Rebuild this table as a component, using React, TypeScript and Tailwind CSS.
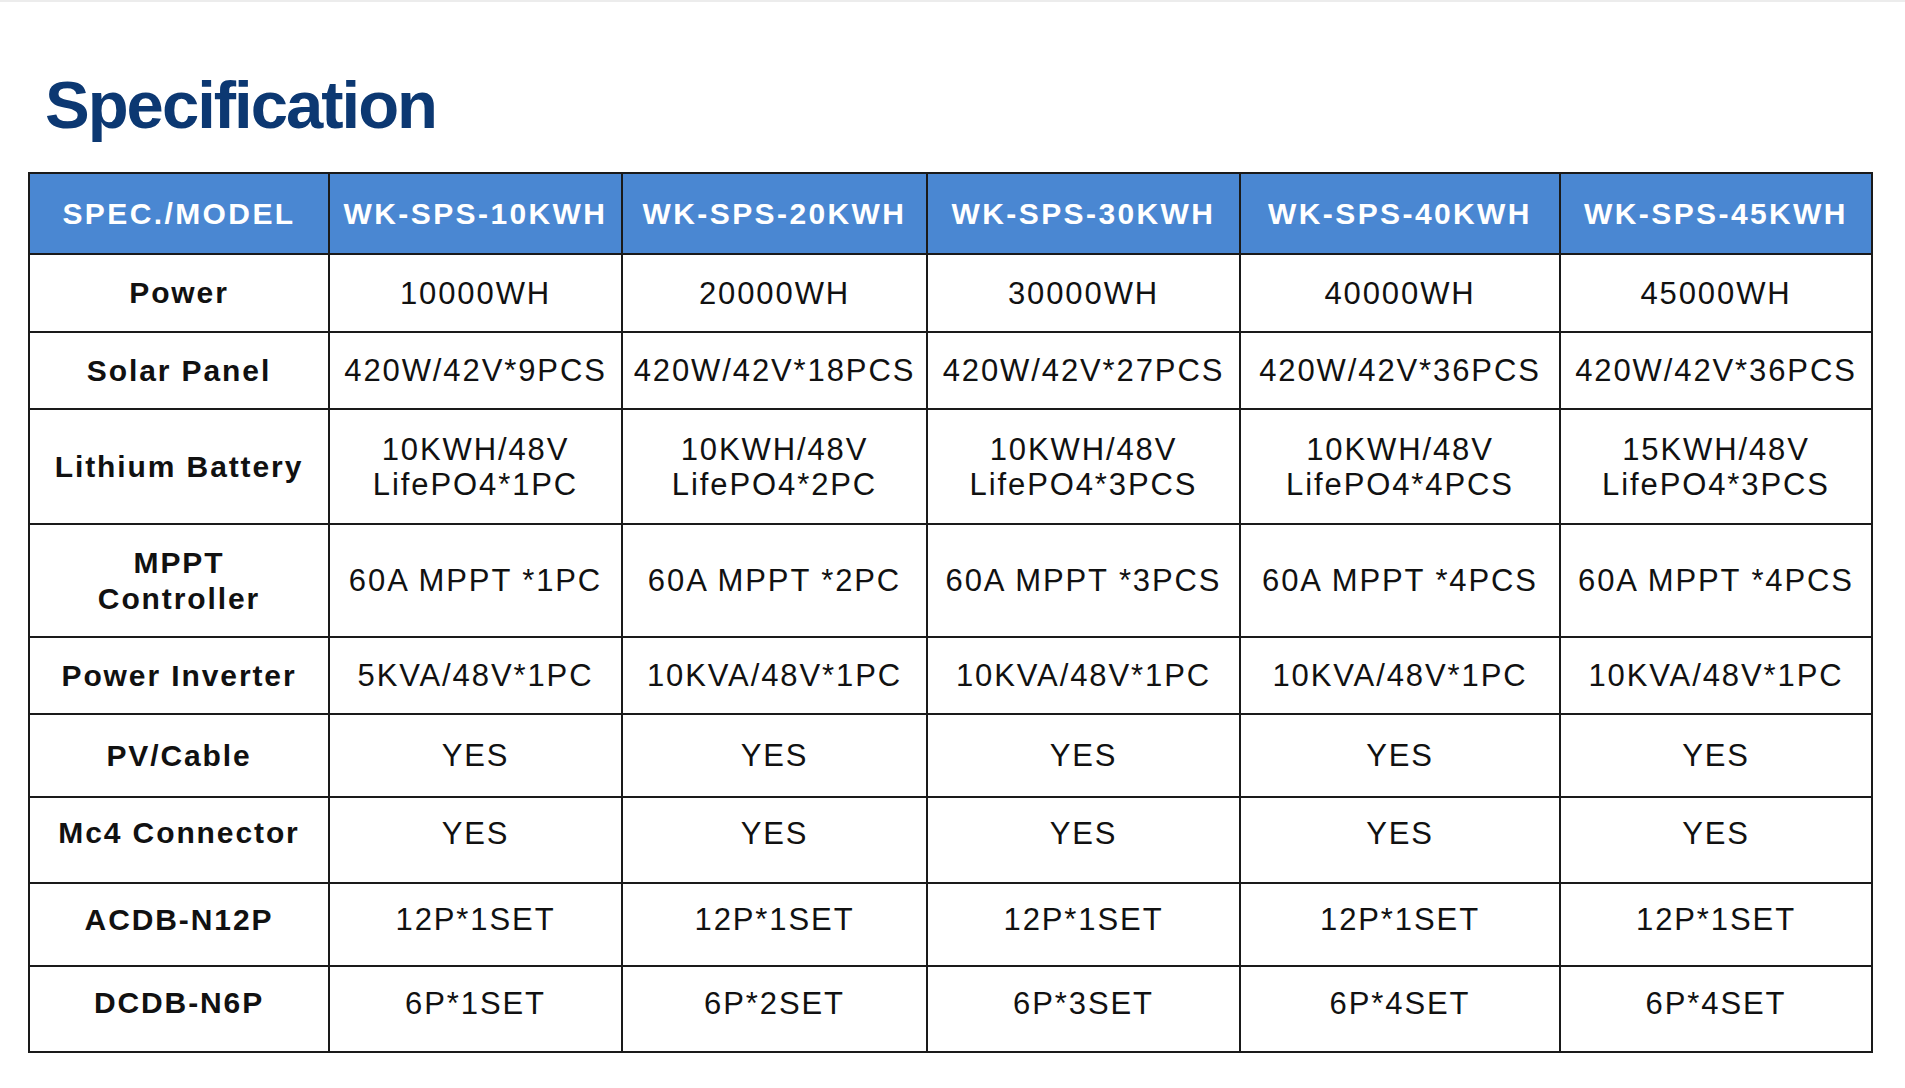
import React from "react";

const headers = [
  "SPEC./MODEL",
  "WK-SPS-10KWH",
  "WK-SPS-20KWH",
  "WK-SPS-30KWH",
  "WK-SPS-40KWH",
  "WK-SPS-45KWH",
];

const rows: { label: React.ReactNode; values: React.ReactNode[]; pad: string }[] = [
  { label: "Power", pad: "pb-0", values: ["10000WH", "20000WH", "30000WH", "40000WH", "45000WH"] },
  {
    label: "Solar Panel",
    pad: "pb-0",
    values: ["420W/42V*9PCS", "420W/42V*18PCS", "420W/42V*27PCS", "420W/42V*36PCS", "420W/42V*36PCS"],
  },
  {
    label: "Lithium Battery",
    pad: "pb-0",
    values: [
      <>10KWH/48V<br />LifePO4*1PC</>,
      <>10KWH/48V<br />LifePO4*2PC</>,
      <>10KWH/48V<br />LifePO4*3PCS</>,
      <>10KWH/48V<br />LifePO4*4PCS</>,
      <>15KWH/48V<br />LifePO4*3PCS</>,
    ],
  },
  {
    label: <>MPPT<br />Controller</>,
    pad: "pb-0",
    values: ["60A MPPT *1PC", "60A MPPT *2PC", "60A MPPT *3PCS", "60A MPPT *4PCS", "60A MPPT *4PCS"],
  },
  {
    label: "Power Inverter",
    pad: "pb-0",
    values: ["5KVA/48V*1PC", "10KVA/48V*1PC", "10KVA/48V*1PC", "10KVA/48V*1PC", "10KVA/48V*1PC"],
  },
  { label: "PV/Cable", pad: "pb-0", values: ["YES", "YES", "YES", "YES", "YES"] },
  { label: "Mc4 Connector", pad: "pb-[14px]", values: ["YES", "YES", "YES", "YES", "YES"] },
  { label: "ACDB-N12P", pad: "pb-[10px]", values: ["12P*1SET", "12P*1SET", "12P*1SET", "12P*1SET", "12P*1SET"] },
  { label: "DCDB-N6P", pad: "pb-[12px]", values: ["6P*1SET", "6P*2SET", "6P*3SET", "6P*4SET", "6P*4SET"] },
];

export default function App() {
  return (
    <div
      className="w-[1905px] h-[1088px] bg-white overflow-hidden"
      style={{ fontFamily: '"Liberation Sans", Arial, sans-serif' }}
    >
      <div className="h-[2px] bg-[#ececec]" />
      <div className="pl-[28px] pt-[69px]">
        <h1 className="ml-[17px] text-[67px] leading-[67px] font-bold tracking-[-2px] text-[#0c3872]">
          Specification
        </h1>
        <div className="mt-[34px] w-fit grid grid-cols-[298px_291px_303px_311px_318px_310px] grid-rows-[79px_76px_75px_113px_111px_75px_81px_84px_81px_84px] gap-[2px] p-[2px] bg-[#1a1a1a]">
          {headers.map((h) => (
            <div
              key={h}
              className="bg-[#4a87d2] text-white font-bold text-[30px] tracking-[2.4px] flex items-center justify-center text-center whitespace-nowrap"
            >
              {h}
            </div>
          ))}
          {rows.map((r, i) => (
            <React.Fragment key={i}>
              <div
                className={`bg-white text-[#111] font-bold text-[30px] leading-[36px] tracking-[1.9px] flex items-center justify-center text-center whitespace-nowrap ${r.pad}`}
              >
                <span>{r.label}</span>
              </div>
              {r.values.map((v, j) => (
                <div
                  key={j}
                  className={`bg-white text-[#111] text-[31px] leading-[35px] tracking-[1.9px] flex items-center justify-center text-center whitespace-nowrap ${r.pad}`}
                >
                  <span>{v}</span>
                </div>
              ))}
            </React.Fragment>
          ))}
        </div>
      </div>
    </div>
  );
}
